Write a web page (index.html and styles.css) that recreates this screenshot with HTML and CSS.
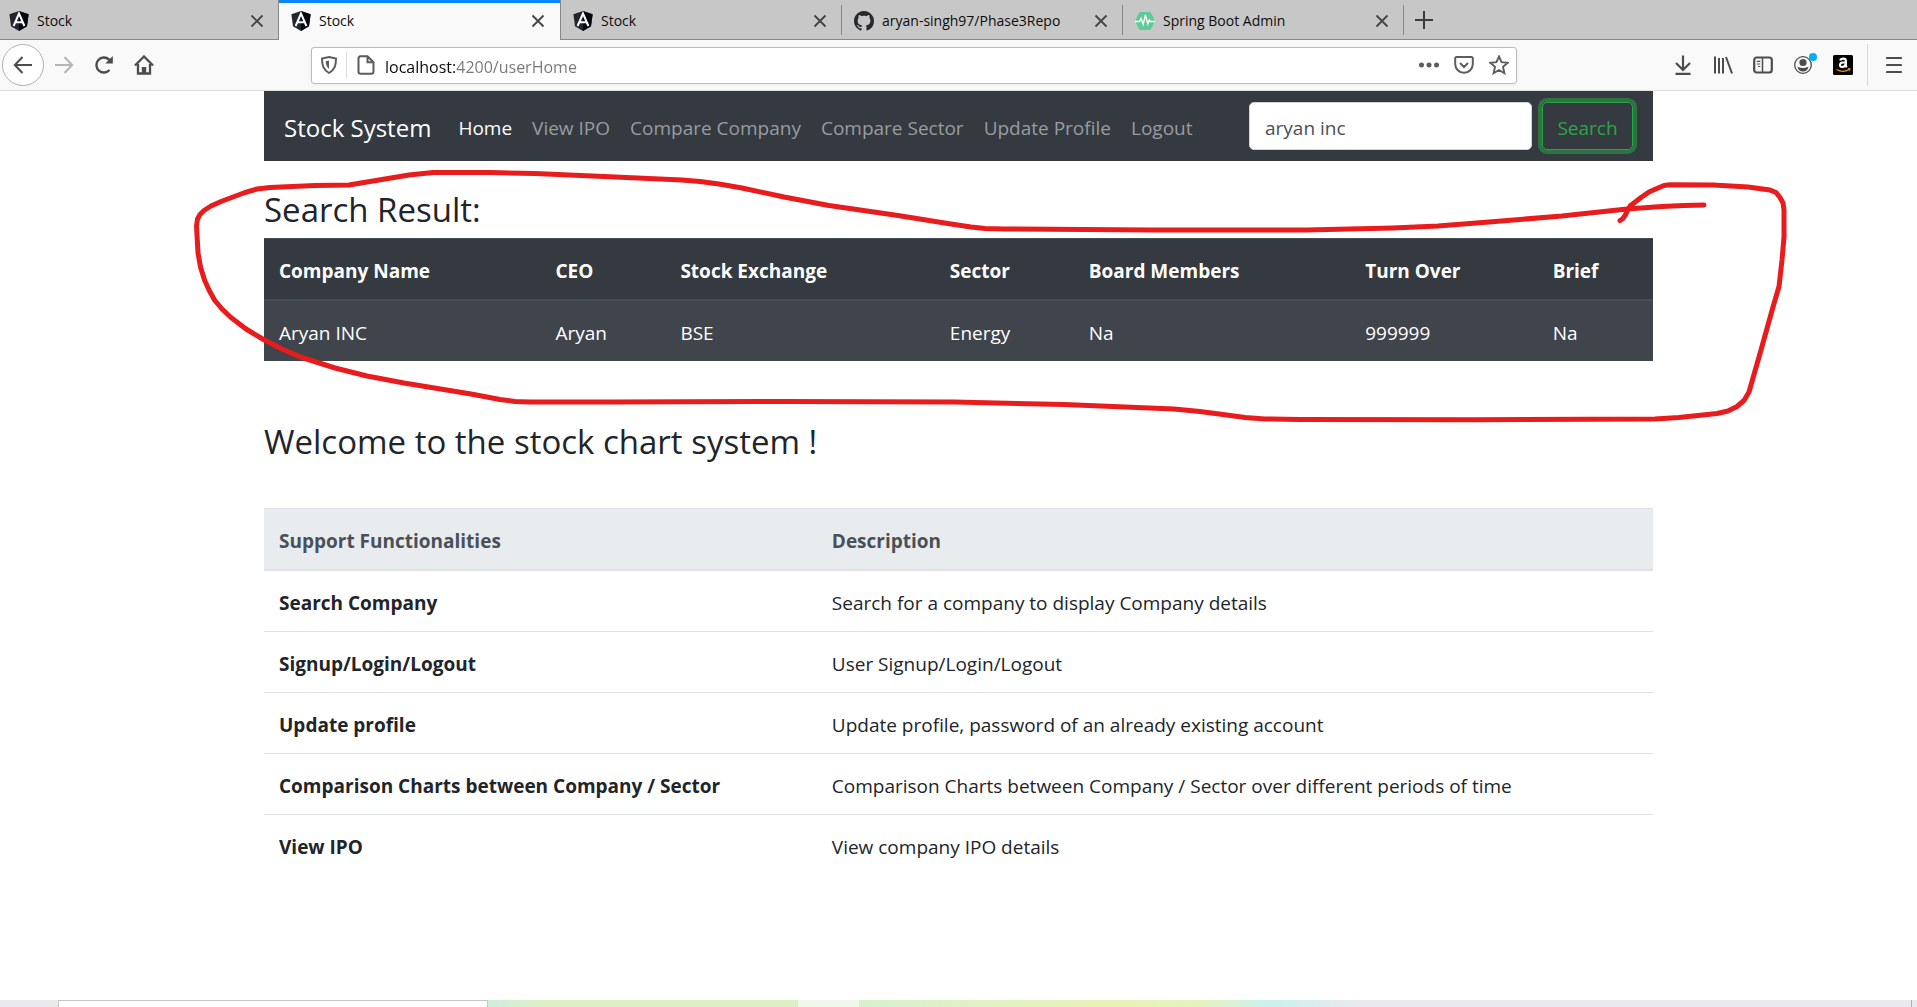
FILE: index.html
```html
<!DOCTYPE html>
<html lang="en">
<head>
<meta charset="utf-8">
<title>Stock</title>
<link rel="stylesheet" href="styles.css">
</head>
<body>
<svg class="defs" aria-hidden="true">
  <symbol id="angular" viewBox="0 0 20 20">
    <path d="M10 0 19.600 3.300 18 15.200 10 20 2 15.200.4 3.300z" fill="#23252f"/>
    <path d="M10 0 19.600 3.300 18 15.200 10 20z" fill="#05070f"/>
    <path d="M4.600 15 10 2.600 15.400 15M6.600 11.300h6.800" fill="none" stroke="#fff" stroke-width="2"/>
  </symbol>
  <symbol id="close" viewBox="0 0 14 14">
    <path d="M1.500 1.500 12.500 12.500M12.500 1.500 1.500 12.500" fill="none" stroke="#444" stroke-width="1.800"/>
  </symbol>
</svg>

<header class="browser">
  <div class="tabs">
    <div class="tab tab-first">
      <button class="tab-label"><svg class="favicon"><use href="#angular"/></svg>Stock</button>
      <button class="tab-close" aria-label="Close tab"><svg class="close"><use href="#close"/></svg></button>
    </div>
    <div class="tab tab-active">
      <button class="tab-label"><svg class="favicon"><use href="#angular"/></svg>Stock</button>
      <button class="tab-close" aria-label="Close tab"><svg class="close"><use href="#close"/></svg></button>
    </div>
    <div class="tab tab-divided">
      <button class="tab-label"><svg class="favicon"><use href="#angular"/></svg>Stock</button>
      <button class="tab-close" aria-label="Close tab"><svg class="close"><use href="#close"/></svg></button>
    </div>
    <div class="tab tab-divided">
      <button class="tab-label"><svg class="favicon" viewBox="0 0 16 16"><path fill="#24292e" d="M8 0C3.580 0 0 3.580 0 8c0 3.540 2.290 6.530 5.470 7.590.4.070.55-.17.55-.38 0-.19-.01-.82-.01-1.490-2.010.37-2.530-.49-2.690-.94-.09-.23-.48-.94-.82-1.130-.28-.15-.68-.52-.01-.53.63-.01 1.080.58 1.230.82.72 1.210 1.870.87 2.330.66.070-.52.28-.87.51-1.070-1.780-.2-3.640-.89-3.640-3.950 0-.87.31-1.590.82-2.150-.08-.2-.36-1.020.08-2.120 0 0 .67-.21 2.200.82.64-.18 1.320-.27 2-.27s1.360.09 2 .27c1.530-1.040 2.200-.82 2.200-.82.44 1.100.16 1.920.08 2.120.51.56.82 1.270.82 2.150 0 3.070-1.870 3.750-3.650 3.950.29.25.54.73.54 1.480 0 1.070-.01 1.930-.01 2.200 0 .21.15.46.55.38A8.010 8.010 0 0 0 16 8c0-4.420-3.580-8-8-8z"/></svg>aryan-singh97/Phase3Repo</button>
      <button class="tab-close" aria-label="Close tab"><svg class="close"><use href="#close"/></svg></button>
    </div>
    <div class="tab tab-divided">
      <button class="tab-label"><svg class="favicon" viewBox="0 0 20 20"><path d="M5.500 1h9q1 0 1.500 1l3.500 7q.5 1 0 2L16 18q-.5 1-1.500 1h-9q-1 0-1.500-1L.5 11q-.5-1 0-2L4 2q.5-1 1.500-1z" fill="#5fca96"/><path d="M0 10.500h4.500l1.500-3 2.200 6L10.400 4l2.400 9 1.600-4 1 1.500H20" fill="none" stroke="#fff" stroke-width="1.300"/></svg>Spring Boot Admin</button>
      <button class="tab-close" aria-label="Close tab"><svg class="close"><use href="#close"/></svg></button>
    </div>
    <button class="new-tab" aria-label="New tab"><svg width="18" height="18" viewBox="0 0 18 18"><path d="M9 0v18M0 9h18" stroke="#3c3c3c" stroke-width="2"/></svg></button>
  </div>

  <div class="toolbar">
    <div class="history">
      <button class="icon-btn back" aria-label="Back"><svg width="20" height="20" viewBox="0 0 20 20"><path d="M19 10H2M9.500 2 1.800 10l7.700 8"/></svg></button>
      <button class="icon-btn forward" aria-label="Forward"><svg width="20" height="20" viewBox="0 0 20 20"><path d="M1 10h17M10.500 2l7.700 8-7.700 8"/></svg></button>
      <button class="icon-btn" aria-label="Reload"><svg width="20" height="20" viewBox="0 0 20 20"><path d="M15.500 15a7.500 7.500 0 1 1-.5-10.500l2 2" stroke-width="2.400"/><path d="M18.800 1v7.500h-7.500z" fill="#4c4c4c" stroke="none"/></svg></button>
      <button class="icon-btn" aria-label="Home"><svg width="20" height="20" viewBox="0 0 20 20"><path d="M1 10.500 10 1.500l9 9M4 9v9.500h12V9" stroke-width="2.300"/><path d="M7.800 18v-6h4.400v6z" fill="#4c4c4c" stroke="none"/></svg></button>
    </div>
    <div class="urlbar">
      <button class="icon-btn shield" aria-label="Tracking protection"><svg width="18" height="18" viewBox="0 0 18 18"><path d="M9 1 16 2.600c0 6.500-1 11-7 14.400C3 13.600 2 9.100 2 2.600z" stroke-width="2"/><path d="M9 4.500v8.500C6.500 11 5.800 8.500 5.700 5.300z" fill="#5c5c5c" stroke="none"/></svg></button>
      <span class="url-divider"></span>
      <button class="icon-btn page-info" aria-label="Page information"><svg width="18" height="20" viewBox="0 0 18 20"><path d="M3.500 1.200h7l6 6v9.300a2.300 2.300 0 0 1-2.300 2.300H3.800a2.300 2.300 0 0 1-2.300-2.300V3.500a2.300 2.300 0 0 1 2-2.300zM10.500 1.200v6h6" stroke-width="2"/></svg></button>
      <input class="url-input" type="text" aria-label="Address" value="localhost:4200/userHome">
      <button class="icon-btn action" aria-label="Page actions"><svg width="20" height="20" viewBox="0 0 20 20"><g fill="#5c5c5c" stroke="none"><circle cx="2.500" cy="10" r="2.500"/><circle cx="10" cy="10" r="2.500"/><circle cx="17.500" cy="10" r="2.500"/></g></svg></button>
      <button class="icon-btn action" aria-label="Save to Pocket"><svg width="20" height="20" viewBox="0 0 20 20"><path d="M2.500 2h15a1.300 1.300 0 0 1 1.300 1.300V9a8.800 8.800 0 0 1-17.600 0V3.300A1.300 1.300 0 0 1 2.500 2zM6 8l4 4 4-4" stroke-width="2"/></svg></button>
      <button class="icon-btn action" aria-label="Bookmark"><svg width="20" height="20" viewBox="0 0 20 20"><path d="m10 1.500 2.500 5.700 6.200.6-4.700 4.100 1.400 6.300L10 15l-5.400 3.200L6 11.900 1.300 7.800l6.200-.6z" stroke-width="1.900"/></svg></button>
    </div>
    <div class="tools">
      <button class="icon-btn" aria-label="Downloads"><svg width="20" height="20" viewBox="0 0 20 20"><path d="M10 .5v14M3 8l7 7 7-7M2.500 18.800h15" stroke-width="2.200"/></svg></button>
      <button class="icon-btn" aria-label="Library"><svg width="20" height="20" viewBox="0 0 20 20"><path d="M2 1.500v17M6 3v15.500M10 3v15.500M13 2l6 16.500" stroke-width="2"/></svg></button>
      <button class="icon-btn" aria-label="Sidebars"><svg width="20" height="20" viewBox="0 0 20 20"><rect x="1.200" y="2.500" width="17.600" height="15" rx="2.500" stroke-width="2.200"/><path d="M9.500 3v14" stroke-width="1.500"/><path d="M3.800 6.300h3.500M3.800 9h3.500M5 11.500h2.300" stroke-width="1.200"/></svg></button>
      <button class="icon-btn account" aria-label="Account"><svg width="20" height="20" viewBox="0 0 20 20"><circle cx="10" cy="10" r="8.300" stroke-width="1.300"/><circle cx="10" cy="7.500" r="3.600" fill="#4c4c4c" stroke="none"/><path d="M4.500 11.800q5.500 2.600 11 0-.8 4.700-5.500 4.700t-5.500-4.700z" fill="#4c4c4c" stroke="none"/></svg><span class="notice"></span></button>
      <button class="icon-btn" aria-label="Amazon"><svg width="20" height="20" viewBox="0 0 20 20"><rect width="20" height="20" rx="1.500" fill="#000" stroke="none"/><path d="M7.200 5.600q.5-2 3-2 2.700 0 2.700 2.400v4.400q0 1 .9 1.900M12.800 7.200q-5.800-.2-5.800 2.800 0 2 2 2 3.400 0 3.800-3.600" stroke="#fff" stroke-width="2.100"/><path d="M3.500 14.500q6.500 4 13-.3M14.800 13.800l2-.1-.5 2" stroke="#e8910c" stroke-width="1.200"/></svg></button>
      <span class="tool-divider"></span>
      <button class="icon-btn" aria-label="Menu"><svg width="16" height="20" viewBox="0 0 16 20"><path d="M1 3h14M1 10h14M1 17h14" stroke-width="2.200" stroke-linecap="round"/></svg></button>
    </div>
  </div>
</header>

<main class="container">
  <nav class="navbar">
    <a class="brand" href="#">Stock System</a>
    <ul class="nav">
      <li><a class="nav-link nav-current" href="#">Home</a></li>
      <li><a class="nav-link" href="#">View IPO</a></li>
      <li><a class="nav-link" href="#">Compare Company</a></li>
      <li><a class="nav-link" href="#">Compare Sector</a></li>
      <li><a class="nav-link" href="#">Update Profile</a></li>
      <li><a class="nav-link" href="#">Logout</a></li>
    </ul>
    <form class="search">
      <input class="search-input" type="text" aria-label="Search" value="aryan inc">
      <button class="search-btn" type="button">Search</button>
    </form>
  </nav>

  <h3 class="heading">Search Result:</h3>
  <table class="table table-dark">
    <colgroup><col class="c-name"><col class="c-ceo"><col class="c-exchange"><col class="c-sector"><col class="c-board"><col class="c-turnover"><col></colgroup>
    <thead>
      <tr><th>Company Name</th><th>CEO</th><th>Stock Exchange</th><th>Sector</th><th>Board Members</th><th>Turn Over</th><th>Brief</th></tr>
    </thead>
    <tbody>
      <tr><td>Aryan INC</td><td>Aryan</td><td>BSE</td><td>Energy</td><td>Na</td><td>999999</td><td>Na</td></tr>
    </tbody>
  </table>

  <h3 class="heading welcome">Welcome to the stock chart system !</h3>
  <table class="table table-light">
    <colgroup><col class="c-function"><col></colgroup>
    <thead>
      <tr><th>Support Functionalities</th><th>Description</th></tr>
    </thead>
    <tbody>
      <tr><th>Search Company</th><td>Search for a company to display Company details</td></tr>
      <tr><th>Signup/Login/Logout</th><td>User Signup/Login/Logout</td></tr>
      <tr><th>Update profile</th><td>Update profile, password of an already existing account</td></tr>
      <tr><th>Comparison Charts between Company / Sector</th><td>Comparison Charts between Company / Sector over different periods of time</td></tr>
      <tr><th>View IPO</th><td>View company IPO details</td></tr>
    </tbody>
  </table>

  <svg class="marker" width="1620" height="270" viewBox="184 161 1620 270" aria-hidden="true">
    <path d="M1704 205 1684 205.500 1662 206.500 1627 209 1562 216 1489 222 1438 226 1393 228 1306 230 1151 230 1004 229 985 228.500 971 227 951 224 898 215.500 829 205.500 784 197 742 188 719 184 700 181.500 682 180 604 176.500 535 173.500 490 172.500 433 172.500 409 175 382 179.500 349 185 315 185.500 270 187.500 257 189 245 192.500 221 201.500 211 206 204 210.500 200 214.500 197.500 219 196.500 226 198 253 200.500 267 204.500 280 209 290 214.500 300 222 309 231 317.500 246 329 263.500 339.500 282 349 302 357.500 335 368 367 376 404 383 471 394 500 399.500 515 401.500 530 402 611 402 782 401.500 954 402 1064 404.500 1174 409 1200 411.500 1223 414.500 1245 417.500 1265 419 1300 419.500 1472 419.700 1655 419 1679 417.500 1717 413.500 1728 411 1737 406.500 1744 400.500 1749 392 1761 350 1773 307 1779 286.500 1782 260 1784 237 1784 210 1783 203 1780 197.500 1776 192.500 1770 190 1748 187 1713 185 1670 184.700 1664 185.500 1658 188 1649 192 1641 197.500 1630 206 1628 210 1625 215.500 1623 218.500 1620 220.500"/>
  </svg>
</main>

<footer class="taskbar">
  <div class="task-start"></div>
  <div class="task-search"></div>
  <div class="task-apps"><span class="task-current"></span></div>
  <div class="task-desktop"></div>
</footer>
</body>
</html>
```
FILE: styles.css
```css
* { box-sizing: border-box; }

body {
  margin: 0;
  min-height: 100vh;
  display: flex;
  flex-direction: column;
  background: #fff;
  color: #212529;
  font-family: "Open Sans", "Noto Sans", sans-serif;
  font-size: 19px;
  line-height: 30px;
}

button, input { font: inherit; }
button { padding: 0; border: 0; background: none; cursor: pointer; }
.defs { display: none; }

/* Tab strip */
.tabs {
  display: flex;
  height: 40px;
  background: #c7c7c7;
  box-shadow: inset 0 -1px #888;
}
.tab {
  flex: 0 1 281px;
  display: flex;
  align-items: center;
  justify-content: space-between;
  padding: 1px 15px 0 12px;
  font-size: 14px;
  color: #0c0c0d;
}
.tab-first { flex-basis: 278px; padding-left: 9px; padding-right: 14px; }
.tab-active {
  background: #f9f9fa;
  border: 1px solid #888;
  border-width: 0 1px;
  box-shadow: inset 0 3px #0a84ff;
  flex-basis: 283px;
}
.tab-divided {
  background: linear-gradient(#888, #888) right center / 1px 30px no-repeat;
}
.tab-label {
  display: flex;
  align-items: center;
  gap: 8px;
  flex: 1;
  color: inherit;
}
.favicon { width: 20px; height: 20px; }
.tab-close { display: flex; }
.close { width: 14px; height: 14px; }
.new-tab { display: flex; align-items: center; padding: 0 11px; }

/* Toolbar */
.toolbar {
  display: flex;
  align-items: center;
  height: 51px;
  padding: 0 0 0 2px;
  background: #f9f9fa;
  border-bottom: 1px solid #e0e0e1;
}
.icon-btn {
  display: flex;
  align-items: center;
  justify-content: center;
  width: 40px;
  height: 36px;
  color: #4c4c4c;
}
.icon-btn svg { fill: none; stroke: currentColor; stroke-width: 2; }
.history { display: flex; align-items: center; flex: 0 0 309px; }
.history .back {
  width: 42px;
  height: 42px;
  border: 1px solid #b1b1b1;
  border-radius: 50%;
  background: #fff;
}
.history .forward { color: #b5b5b5; }
.urlbar {
  flex: 1;
  display: flex;
  align-items: center;
  height: 37px;
  background: #fff;
  border: 1px solid #bbb;
  border-radius: 3px;
  box-shadow: 0 1px 4px #0000000d;
}
.urlbar .icon-btn { color: #5c5c5c; }
.urlbar .shield { width: 34px; }
.url-divider { width: 1px; height: 26px; background: #ddd; }
.urlbar .page-info { width: 37px; }
.urlbar .action { width: 35px; }
.url-input {
  flex: 1;
  padding: 3px 1px 0;
  border: 0;
  outline: 0;
  font-size: 16px;
  color: #737373;
  background: linear-gradient(90deg, #0c0c0d 72px, #777 72px);
  background-clip: text;
  -webkit-text-fill-color: transparent;
}
.tools { display: flex; align-items: center; padding-left: 146px; }
.account { position: relative; }
.notice {
  position: absolute;
  top: 6px;
  right: 6px;
  width: 8px;
  height: 8px;
  border-radius: 50%;
  background: #00b0f4;
}
.tool-divider { width: 1px; height: 42px; margin: 0 3px 0 4px; background: #d7d7db; }
.tools .icon-btn:last-child { width: 46px; }

/* Page */
.container {
  position: relative;
  flex: 1;
  width: 100%;
  max-width: 1389px;
  margin: 0 auto;
}
.navbar {
  display: flex;
  align-items: center;
  padding: 11px 20px;
  background: #343a40;
}
.brand {
  margin-right: 17px;
  padding-top: 3px;
  font-size: 24px;
  color: #fff;
  text-decoration: none;
}
.nav { display: flex; margin: 0; padding: 3px 0 0; list-style: none; }
.nav-link { padding: 0 10px; color: #999c9f; text-decoration: none; }
.nav-current { color: #fff; }
.search { display: flex; gap: 10px; margin-left: auto; }
.search-input {
  width: 283px;
  height: 48px;
  padding: 3px 15px 0;
  border: 1px solid #ced4da;
  border-radius: 5px;
  color: #495057;
  background: #fff;
}
.search-btn {
  width: 91px;
  padding-top: 3px;
  border: 1px solid #28a745;
  border-radius: 5px;
  color: #28a745;
  box-shadow: 0 0 0 4px #2d7442;
}

.heading {
  margin: 28px 0 7px;
  font-size: 33px;
  font-weight: 400;
  line-height: 42px;
}
.welcome { margin: 60px 0 45px; }

.table {
  width: 100%;
  table-layout: fixed;
  border-spacing: 0;
  text-align: left;
}
.table th, .table td { padding: 17px 15px 13px; }
.table thead th { border-top: 1px solid #dee2e6; border-bottom: 2px solid #dee2e6; }
.table tbody tr + tr > * { border-top: 1px solid #dee2e6; }
.table-dark { color: #fff; background: #343a40; }
.table-dark thead th { border-color: #454d55; }
.table-dark tbody { background: #40444b; }
.table-light thead { color: #495057; background: #e9ecef; }
.c-name, .c-board { width: 19.9%; }
.c-ceo { width: 9%; }
.c-exchange { width: 19.4%; }
.c-sector { width: 10%; }
.c-turnover { width: 13.5%; }
.c-function { width: 39.8%; }

/* Hand-drawn marker loop lying over the search result */
.marker {
  position: absolute;
  top: 70px;
  left: -80px;
  fill: none;
  stroke: #e81c1c;
  stroke-width: 5;
  stroke-linecap: round;
  stroke-linejoin: round;
  pointer-events: none;
}

/* Top edge of the desktop taskbar */
.taskbar { display: flex; height: 7px; background: #e9eaee; }
.task-start { flex: 0 0 58px; }
.task-search { flex: 0 0 430px; border: 1px solid #c6c6c6; border-bottom: 0; background: #fff; }
.task-apps {
  flex: 1;
  display: flex;
  background: linear-gradient(90deg, #cdeedd, #dcf0c6 4%, #dcf0c6 22%, #d9f0cf 28%, #e8f2b4 44%, #e4f3bd 50%, #caf0f0 55%, #e9eaee 61%);
}
.task-current { width: 61px; margin-left: 310px; background: #f0f8ea; }
.task-desktop { flex: 0 0 6px; border-left: 1px solid #b0b0b0; }
```
